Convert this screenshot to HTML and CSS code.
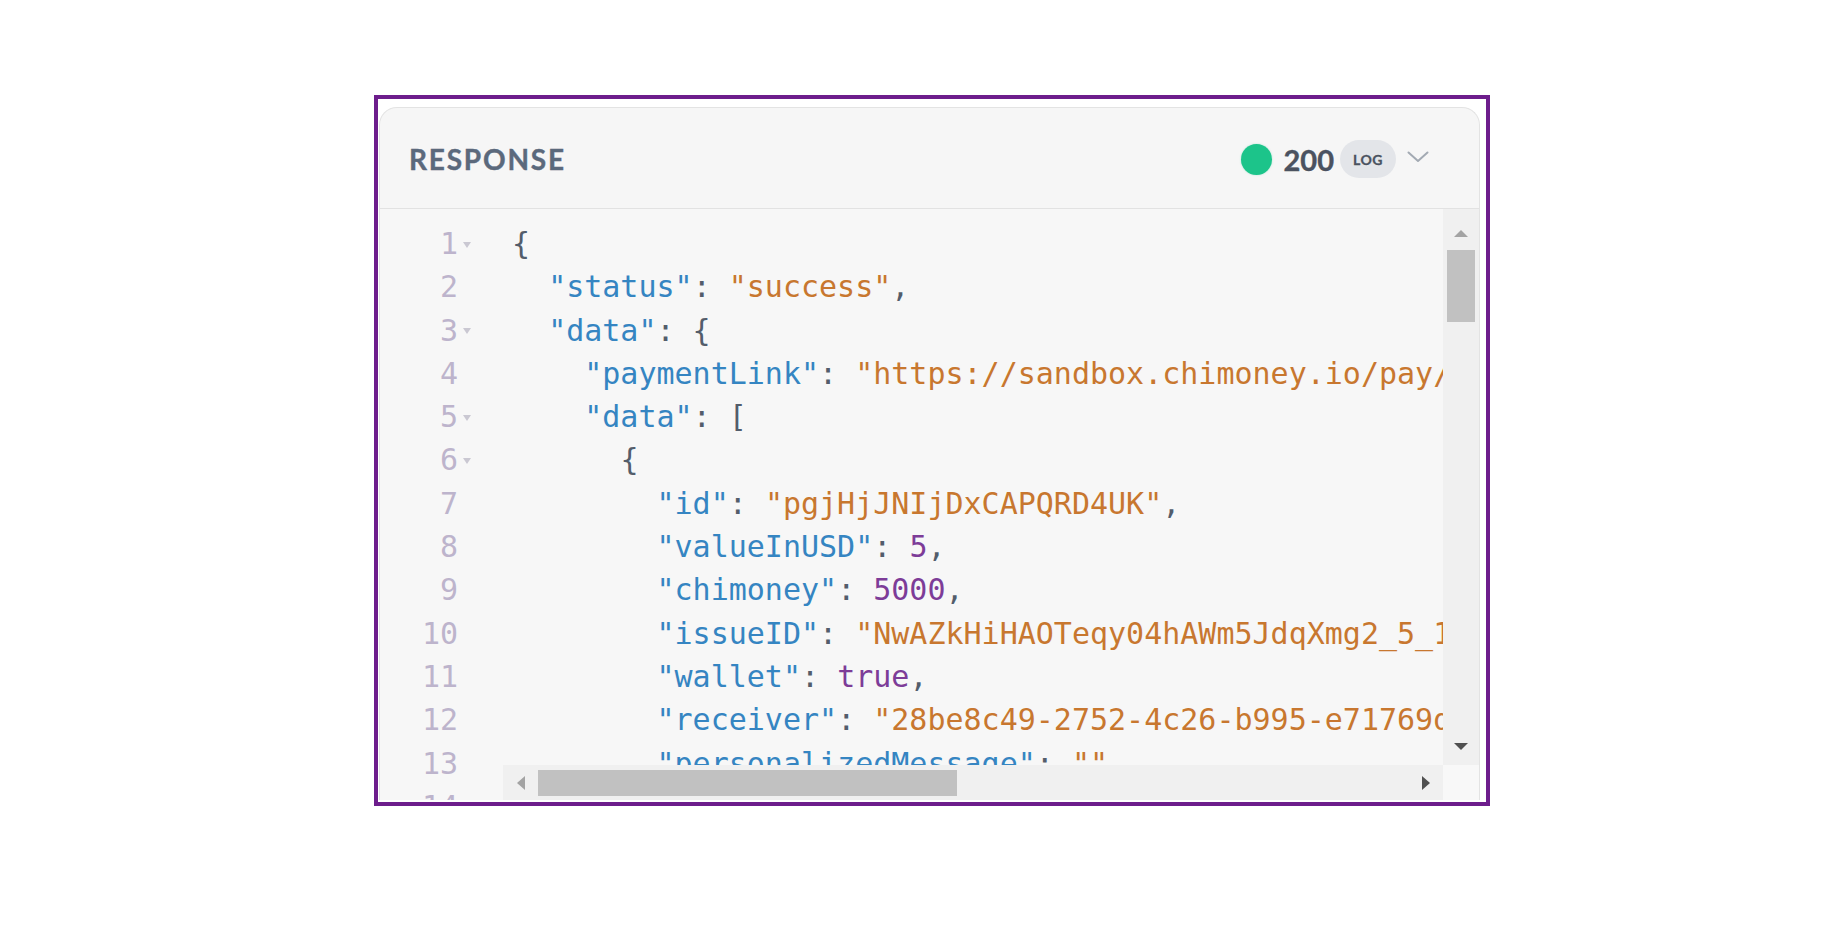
FILE: index.html
```html
<!DOCTYPE html>
<html lang="en">
<head>
<meta charset="utf-8">
<title>Response</title>
<link rel="stylesheet" href="styles.css">
</head>
<body>
<div class="page">
  <div class="frame">
    <div class="card">
      <div class="header">
        <div class="title">RESPONSE</div>
        <div class="status">
          <span class="dot"></span>
          <span class="code-num">200</span>
          <span class="pill">LOG</span>
          <svg class="chev" width="22" height="12" viewBox="0 0 22 12"><polyline points="1.5,1.5 11,10 20.5,1.5" fill="none" stroke="#a3aab3" stroke-width="2" stroke-linecap="round" stroke-linejoin="round"/></svg>
        </div>
      </div>
      <div class="body">
        <div class="gutter">
          <div class="gl"><span class="n">1</span><span class="fold"></span></div>
          <div class="gl"><span class="n">2</span></div>
          <div class="gl"><span class="n">3</span><span class="fold"></span></div>
          <div class="gl"><span class="n">4</span></div>
          <div class="gl"><span class="n">5</span><span class="fold"></span></div>
          <div class="gl"><span class="n">6</span><span class="fold"></span></div>
          <div class="gl"><span class="n">7</span></div>
          <div class="gl"><span class="n">8</span></div>
          <div class="gl"><span class="n">9</span></div>
          <div class="gl"><span class="n">10</span></div>
          <div class="gl"><span class="n">11</span></div>
          <div class="gl"><span class="n">12</span></div>
          <div class="gl"><span class="n">13</span></div>
          <div class="gl"><span class="n">14</span></div>
        </div>
        <div class="code">
<div class="ln"><span class="p">{</span></div>
<div class="ln">  <span class="k">"status"</span><span class="p">: </span><span class="s">"success"</span><span class="p">,</span></div>
<div class="ln">  <span class="k">"data"</span><span class="p">: {</span></div>
<div class="ln">    <span class="k">"paymentLink"</span><span class="p">: </span><span class="s">"https://sandbox.chimoney.io/pay/?issueID=NwAZkHiHAOTeqy04hAWm5JdqXmg2_5_1693574631422"</span><span class="p">,</span></div>
<div class="ln">    <span class="k">"data"</span><span class="p">: [</span></div>
<div class="ln">      <span class="p">{</span></div>
<div class="ln">        <span class="k">"id"</span><span class="p">: </span><span class="s">"pgjHjJNIjDxCAPQRD4UK"</span><span class="p">,</span></div>
<div class="ln">        <span class="k">"valueInUSD"</span><span class="p">: </span><span class="v">5</span><span class="p">,</span></div>
<div class="ln">        <span class="k">"chimoney"</span><span class="p">: </span><span class="v">5000</span><span class="p">,</span></div>
<div class="ln">        <span class="k">"issueID"</span><span class="p">: </span><span class="s">"NwAZkHiHAOTeqy04hAWm5JdqXmg2_5_1693574631422"</span><span class="p">,</span></div>
<div class="ln">        <span class="k">"wallet"</span><span class="p">: </span><span class="v">true</span><span class="p">,</span></div>
<div class="ln">        <span class="k">"receiver"</span><span class="p">: </span><span class="s">"28be8c49-2752-4c26-b995-e71769dc4a1f"</span><span class="p">,</span></div>
<div class="ln">        <span class="k">"personalizedMessage"</span><span class="p">: </span><span class="s">""</span><span class="p">,</span></div>
<div class="ln">        <span class="k">"redeemLink"</span><span class="p">: </span><span class="s">"https://sandbox.chimoney.io/redeem/?chi=a1b2"</span><span class="p">,</span></div>
        </div>
        <div class="vscroll">
          <span class="tri up"></span>
          <span class="vthumb"></span>
          <span class="spacer"></span>
          <span class="tri down"></span>
        </div>
        <div class="hscroll">
          <span class="tri left"></span>
          <span class="hthumb"></span>
          <span class="spacer"></span>
          <span class="tri right"></span>
        </div>
        <div class="corner"></div>
      </div>
    </div>
  </div>
</div>
</body>
</html>
```

FILE: styles.css
```css
html, body {
  margin: 0;
  padding: 0;
  background: #ffffff;
}

.page {
  padding: 95px 0 0 374px;
}

.frame {
  box-sizing: border-box;
  width: 1116px;
  height: 711px;
  border: 4px solid #6d1d8c;
  padding: 8px 6px 0 1px;
  overflow: hidden;
  background: #ffffff;
}

.card {
  border: 1px solid #e3e3e3;
  border-bottom: none;
  border-radius: 18px 18px 0 0;
  background: #f6f6f6;
  overflow: hidden;
}

.header {
  height: 100px;
  border-bottom: 1px solid #e2e2e2;
  display: flex;
  align-items: center;
  justify-content: space-between;
  padding: 0 50px 0 29px;
}

.title {
  font-family: Lato, "Open Sans", sans-serif;
  font-weight: 700;
  font-size: 28px;
  letter-spacing: 1.8px;
  color: #5b697c;
  padding-top: 2px;
  -webkit-text-stroke: 0.4px #5b697c;
}

.status {
  display: flex;
  align-items: center;
  padding-top: 2px;
}

.dot {
  width: 31px;
  height: 31px;
  border-radius: 50%;
  background: #1cc48a;
  box-shadow: 0 0 2px rgba(28, 196, 138, 0.35);
}

.code-num {
  margin-left: 12px;
  font-family: Lato, "Open Sans", sans-serif;
  font-weight: 700;
  font-size: 29px;
  color: #4b5260;
  -webkit-text-stroke: 0.4px #4b5260;
}

.pill {
  margin-left: 6px;
  width: 56px;
  height: 38px;
  border-radius: 19px;
  background: #e3e5e9;
  display: flex;
  align-items: center;
  justify-content: center;
  font-family: Lato, "Open Sans", sans-serif;
  font-weight: 700;
  font-size: 14px;
  letter-spacing: 0.5px;
  color: #4a5260;
  -webkit-text-stroke: 0.3px #4a5260;
}

.chev {
  margin-left: 11px;
  margin-top: -4px;
}

.body {
  display: grid;
  grid-template-columns: 123px 1fr 36px;
  grid-template-rows: 556px 35px;
  background: #f7f7f7;
}

.gutter {
  grid-column: 1;
  grid-row: 1 / 3;
  overflow: hidden;
  padding-top: 13px;
  font-family: "DejaVu Sans Mono", monospace;
  font-size: 30px;
  line-height: 43.3px;
  color: #bdb4cc;
}

.gl {
  height: 43.3px;
  display: flex;
  align-items: center;
  padding-left: 42px;
}

.n {
  width: 36px;
  text-align: right;
}

.fold {
  margin-left: 5px;
  width: 0;
  height: 0;
  border-left: 4.5px solid transparent;
  border-right: 4.5px solid transparent;
  border-top: 6px solid #cac8d2;
  margin-top: 2px;
}

.code {
  grid-column: 2;
  grid-row: 1;
  overflow: hidden;
  padding: 13px 0 0 9px;
  font-family: "DejaVu Sans Mono", monospace;
  font-size: 30px;
  line-height: 43.3px;
  color: #535d6b;
}

.ln {
  height: 43.3px;
  white-space: pre;
}

.k { color: #3585c2; }
.s { color: #c8772f; }
.v { color: #7d3c98; }
.p { color: #535d6b; }

.vscroll {
  grid-column: 3;
  grid-row: 1;
  background: #f0f0f0;
  display: flex;
  flex-direction: column;
  align-items: center;
  padding: 21px 0 15px;
  box-sizing: border-box;
}

.vthumb {
  margin-top: 13px;
  width: 28px;
  height: 72px;
  background: #c1c1c1;
}

.spacer {
  flex: 1;
}

.hscroll {
  grid-column: 2;
  grid-row: 2;
  background: #f0f0f0;
  display: flex;
  align-items: center;
  padding: 0 13px 0 14px;
}

.hthumb {
  margin-left: 13px;
  width: 419px;
  height: 26px;
  background: #c1c1c1;
}

.corner {
  grid-column: 3;
  grid-row: 2;
  background: #f8f8f8;
}

.tri {
  width: 0;
  height: 0;
  display: block;
}

.tri.up {
  border-left: 7px solid transparent;
  border-right: 7px solid transparent;
  border-bottom: 7px solid #a3a3a3;
}

.tri.down {
  border-left: 7px solid transparent;
  border-right: 7px solid transparent;
  border-top: 7px solid #505050;
}

.tri.left {
  border-top: 7px solid transparent;
  border-bottom: 7px solid transparent;
  border-right: 8px solid #a3a3a3;
}

.tri.right {
  border-top: 7px solid transparent;
  border-bottom: 7px solid transparent;
  border-left: 8px solid #505050;
}
```
